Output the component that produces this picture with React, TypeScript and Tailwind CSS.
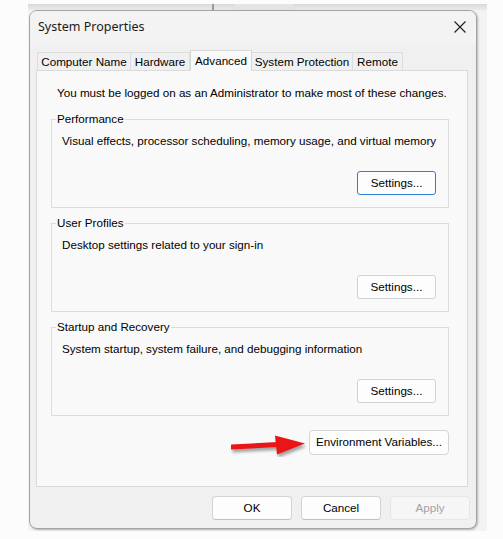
const body = { fontFamily: '"Liberation Sans", Arial, sans-serif' };
const title = { fontFamily: '"Noto Sans", "Segoe UI", sans-serif' };

const tabs = [
  { label: "Computer Name", w: "w-[94px]" },
  { label: "Hardware", w: "w-[59px]" },
  { label: "Advanced", w: "w-[62px]", active: true },
  { label: "System Protection", w: "w-[101px]" },
  { label: "Remote", w: "w-[50px]" },
];

interface GroupProps {
  title: string;
  text: string;
  focused?: boolean;
  className?: string;
}

const Group = ({ title, text, focused, className }: GroupProps) => (
  <fieldset
    className={`ml-[14px] w-[398px] border border-[#dcdcdc] pl-[4px] pr-[12px] pb-[12px] ${className ?? ""}`}
  >
    <legend className="px-[1px] text-[11.65px] leading-[14px]">{title}</legend>
    <p className="ml-[6px] mt-[8px] whitespace-nowrap text-[11.65px] leading-[14px]">{text}</p>
    <div className="mt-[23px] flex justify-end">
      <button
        type="button"
        className={`h-[24px] w-[79px] rounded-[3px] border bg-[#fdfdfd] text-[11.65px] ${
          focused ? "border-[#2f7fd4]" : "border-[#d2d2d2]"
        }`}
      >
        Settings...
      </button>
    </div>
  </fieldset>
);

const CloseIcon = () => (
  <svg width="12" height="12" viewBox="0 0 12 12" className="shrink-0">
    <path d="M0.5 0.5 L11.5 11.5 M11.5 0.5 L0.5 11.5" stroke="#1f1f1f" strokeWidth="1.1" />
  </svg>
);

const RedArrow = () => (
  <svg width="78" height="30" viewBox="0 0 78 30" className="shrink-0">
    <defs>
      <filter id="blur" x="-20%" y="-40%" width="140%" height="180%">
        <feGaussianBlur stdDeviation="1.4" />
      </filter>
    </defs>
    <g transform="translate(1.5 3)" filter="url(#blur)" fill="#000" opacity="0.35">
      <polygon points="3,17.5 50,15 50,20 3,22.5" />
      <polygon points="47,8.5 77,16.5 49,27.5" />
    </g>
    <polygon points="3,17.5 50,15 50,20 3,22.5" fill="#ec1515" />
    <polygon points="47,8.5 77,16.5 49,27.5" fill="#ec1515" />
  </svg>
);

const FooterButton = ({ label, disabled }: { label: string; disabled?: boolean }) => (
  <button
    type="button"
    className={`h-[24px] w-[80px] rounded-[4px] border text-[11.65px] ${
      disabled
        ? "border-[#e6e6e6] bg-[#f6f6f6] text-[#a3a3a3]"
        : "border-[#d4d4d4] border-b-[#c2c2c2] bg-[#fdfdfd] text-black"
    }`}
  >
    {label}
  </button>
);

export default function App() {
  return (
    <div className="h-[539px] w-[503px] bg-[#fcfcfd] pl-[28px] pt-[4px]" style={body}>
      <div className="flex h-[527px] w-[459px] flex-col bg-[#f3f3f5]">
        <div className="flex h-[6px] bg-gradient-to-b from-[#d9d9d9] to-[#ebebeb]">
          <div className="ml-[184px] w-[2px] bg-[#9a9a9a]" />
          <div className="ml-[20px] w-[60px] bg-[#e4e4e4]" />
        </div>

        <div className="ml-[1px] flex h-[519px] w-[448px] flex-col overflow-hidden rounded-[8px] border border-[#a3a3a3] bg-[#f0f0f0] shadow-[1px_1px_2px_rgba(0,0,0,0.25)]">
          <div className="flex h-[32px] items-center justify-between bg-[#f3f3f3] pl-[8px] pr-[10px]">
            <span className="text-[12.5px] text-[#1a1a1a]" style={title}>
              System Properties
            </span>
            <CloseIcon />
          </div>

          <div className="flex flex-1 flex-col pl-[6px] pt-[7px]">
            <div className="flex h-[20px] items-end pl-[1px]">
              {tabs.map((t) =>
                t.active ? (
                  <div
                    key={t.label}
                    className={`relative z-10 -mb-[1px] flex h-[21px] items-center justify-center border border-b-0 border-[#d6d6d6] bg-[#f9f9f9] text-[11.65px] ${t.w}`}
                  >
                    {t.label}
                  </div>
                ) : (
                  <div
                    key={t.label}
                    className={`flex h-[18px] items-center justify-center border-t border-r border-[#dedede] text-[11.65px] first:border-l ${t.w}`}
                  >
                    {t.label}
                  </div>
                )
              )}
            </div>

            <div className="flex h-[417px] w-[432px] flex-col border border-[#dadada] bg-[#f9f9f9] pt-[15px]">
              <p className="ml-[20px] whitespace-nowrap text-[11.65px] leading-[14px]">
                You must be logged on as an Administrator to make most of these changes.
              </p>
              <Group
                className="mt-[12px]"
                title="Performance"
                text="Visual effects, processor scheduling, memory usage, and virtual memory"
                focused
              />
              <Group className="mt-[8px]" title="User Profiles" text="Desktop settings related to your sign-in" />
              <Group
                className="mt-[8px]"
                title="Startup and Recovery"
                text="System startup, system failure, and debugging information"
              />
              <div className="ml-[14px] mt-[11px] flex w-[398px] items-center justify-end gap-[3px]">
                <RedArrow />
                <button
                  type="button"
                  className="h-[25px] w-[140px] rounded-[4px] border border-[#d4d4d4] bg-[#fdfdfd] text-[11.65px]"
                >
                  Environment Variables...
                </button>
              </div>
            </div>

            <div className="mt-[9px] flex justify-end gap-[9px] pr-[6px]">
              <FooterButton label="OK" />
              <FooterButton label="Cancel" />
              <FooterButton label="Apply" disabled />
            </div>
          </div>
        </div>
      </div>
    </div>
  );
}
